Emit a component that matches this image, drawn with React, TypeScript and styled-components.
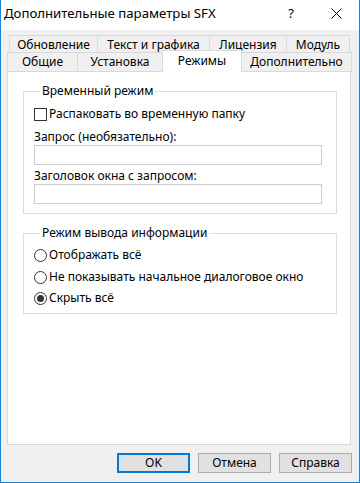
import React from 'react';
import styled, { createGlobalStyle } from 'styled-components';

const GlobalStyle = createGlobalStyle`
  html, body { margin: 0; padding: 0; background: #ffffff; }
  body {
    font-family: "Noto Sans", "Segoe UI", "Liberation Sans", sans-serif;
    font-size: 12px;
    color: #000000;
  }
  * { box-sizing: border-box; }
`;

const Window = styled.div`
  width: 360px;
  height: 483px;
  display: flex;
  flex-direction: column;
  border: 1px solid #1883d7;
  border-top: none;
  background: #f0f0f0;
`;

const TitleBar = styled.div`
  height: 30px;
  flex: none;
  display: flex;
  align-items: center;
  background: #ffffff;
  padding-bottom: 4px;
`;

const Title = styled.div`
  flex: 1;
  padding-left: 3px;
  font-size: 13.2px;
  line-height: 17px;
  white-space: nowrap;
`;

const CaptionButton = styled.div<{ $w: number }>`
  width: ${(p) => p.$w}px;
  height: 26px;
  display: flex;
  align-items: center;
  justify-content: center;
  font-size: 13px;
  line-height: 16px;
`;

const Body = styled.div`
  flex: 1;
  display: flex;
  flex-direction: column;
  padding: 5px 8px 9px 6px;
  min-height: 0;
`;

const TabRow = styled.div<{ $h: number; $indent: number; $front?: boolean }>`
  display: flex;
  align-items: flex-end;
  height: ${(p) => p.$h}px;
  padding-left: ${(p) => p.$indent}px;
  position: relative;
  z-index: ${(p) => (p.$front ? 2 : 1)};
  margin-bottom: ${(p) => (p.$front ? -1 : 0)}px;
`;

const Tab = styled.div<{ $w: number; $h: number; $active?: boolean; $first?: boolean; $bottom?: boolean }>`
  width: ${(p) => p.$w}px;
  height: ${(p) => p.$h}px;
  flex: none;
  margin-left: ${(p) => (p.$first ? 0 : -1)}px;
  border: 1px solid #d9d9d9;
  border-bottom: ${(p) => (p.$bottom && !p.$active ? '1px solid #d9d9d9' : 'none')};
  background: ${(p) => (p.$active ? '#ffffff' : '#f0f0f0')};
  position: relative;
  z-index: ${(p) => (p.$active ? 2 : 1)};
  display: flex;
  justify-content: center;
  padding-top: ${(p) => (p.$active ? 2 : 1)}px;
  font-size: 12px;
  line-height: 16px;
  white-space: nowrap;
`;

const Panel = styled.div`
  flex: 1;
  background: #ffffff;
  border: 1px solid #d9d9d9;
  padding: 11px 13px 0 15px;
  display: flex;
  flex-direction: column;
  gap: 11px;
`;

const Group = styled.fieldset<{ $pb: number }>`
  margin: 0;
  padding: 0 10px ${(p) => p.$pb}px 10px;
  border: 1px solid #dcdcdc;
  min-width: 0;
  display: flex;
  flex-direction: column;
`;

const Legend = styled.legend`
  margin-left: 6px;
  padding: 0 2px;
  font-size: 12px;
  line-height: 16px;
`;

const OptionRow = styled.div<{ $mt: number }>`
  display: flex;
  align-items: center;
  height: 16px;
  margin-top: ${(p) => p.$mt}px;
  gap: 2px;
  line-height: 16px;
  white-space: nowrap;
`;

const CheckBox = styled.span`
  width: 13px;
  height: 13px;
  flex: none;
  border: 1px solid #333333;
  background: #ffffff;
`;

const Radio = styled.span<{ $checked?: boolean }>`
  width: 13px;
  height: 13px;
  flex: none;
  border: 1px solid #333333;
  border-radius: 50%;
  background: #ffffff;
  display: flex;
  align-items: center;
  justify-content: center;
  &::after {
    content: '';
    display: ${(p) => (p.$checked ? 'block' : 'none')};
    width: 7px;
    height: 7px;
    border-radius: 50%;
    background: #333333;
  }
`;

const FieldLabel = styled.div<{ $mt: number }>`
  margin-top: ${(p) => p.$mt}px;
  line-height: 16px;
  white-space: nowrap;
`;

const TextBox = styled.div`
  height: 20px;
  width: 288px;
  border: 1px solid #cccccc;
  background: #ffffff;
`;

const ButtonRow = styled.div`
  display: flex;
  justify-content: flex-end;
  gap: 8px;
  margin-top: 8px;
  margin-right: -1px;
`;

const Button = styled.div<{ $default?: boolean }>`
  width: 73px;
  height: 20px;
  display: flex;
  align-items: center;
  justify-content: center;
  background: #e1e1e1;
  border: ${(p) => (p.$default ? '2px solid #0078d7' : '1px solid #adadad')};
  font-size: 12px;
  line-height: 16px;
`;

const topTabs = [
  { label: 'Обновление', w: 89 },
  { label: 'Текст и графика', w: 113 },
  { label: 'Лицензия', w: 78 },
  { label: 'Модуль', w: 64 },
];

const frontTabs = [
  { label: 'Общие', w: 71 },
  { label: 'Установка', w: 86 },
  { label: 'Режимы', w: 80, active: true },
  { label: 'Дополнительно', w: 111 },
];

export default function App() {
  return (
    <>
      <GlobalStyle />
      <Window>
        <TitleBar>
          <Title>Дополнительные параметры SFX</Title>
          <CaptionButton $w={46}>?</CaptionButton>
          <CaptionButton $w={45}>
            <svg width="11" height="11" viewBox="0 0 11 11">
              <path d="M0.5 0.5 L10.5 10.5 M10.5 0.5 L0.5 10.5" stroke="#000" strokeWidth="1" fill="none" />
            </svg>
          </CaptionButton>
        </TitleBar>
        <Body>
          <TabRow $h={17} $indent={2}>
            {topTabs.map((t, i) => (
              <Tab key={t.label} $w={t.w} $h={17} $first={i === 0}>
                {t.label}
              </Tab>
            ))}
          </TabRow>
          <TabRow $h={20} $indent={0} $front>
            {frontTabs.map((t, i) => (
              <Tab
                key={t.label}
                $w={t.w}
                $h={t.active ? 22 : 20}
                $first={i === 0}
                $active={t.active}
                $bottom
              >
                {t.label}
              </Tab>
            ))}
          </TabRow>
          <Panel>
            <Group $pb={9}>
              <Legend>Временный режим</Legend>
              <OptionRow $mt={7}>
                <CheckBox />
                <span>Распаковать во временную папку</span>
              </OptionRow>
              <FieldLabel $mt={7}>Запрос (необязательно):</FieldLabel>
              <TextBox />
              <FieldLabel $mt={3}>Заголовок окна с запросом:</FieldLabel>
              <TextBox />
            </Group>
            <Group $pb={7}>
              <Legend>Режим вывода информации</Legend>
              <OptionRow $mt={6}>
                <Radio />
                <span>Отображать всё</span>
              </OptionRow>
              <OptionRow $mt={6}>
                <Radio />
                <span>Не показывать начальное диалоговое окно</span>
              </OptionRow>
              <OptionRow $mt={5}>
                <Radio $checked />
                <span>Скрыть всё</span>
              </OptionRow>
            </Group>
          </Panel>
          <ButtonRow>
            <Button $default>OK</Button>
            <Button>Отмена</Button>
            <Button>Справка</Button>
          </ButtonRow>
        </Body>
      </Window>
    </>
  );
}
